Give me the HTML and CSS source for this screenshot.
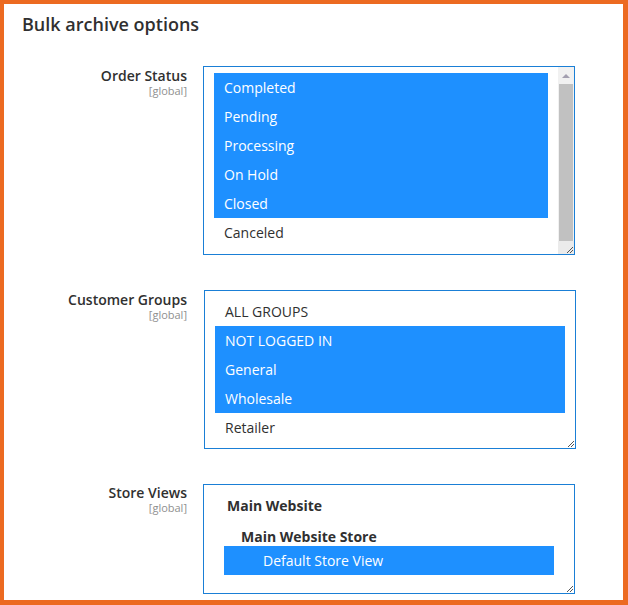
FILE: index.html
```html
<!DOCTYPE html>
<html lang="en">
<head>
<meta charset="utf-8">
<title>Bulk archive options</title>
<link rel="stylesheet" href="styles.css">
</head>
<body>
<div class="frame">
  <h2 class="title">Bulk archive options</h2>

  <div class="field">
    <div class="label"><span class="name">Order Status</span><span class="scope">[global]</span></div>
    <div class="select select-scroll">
      <div class="list-wrap">
        <div class="list list-clip">
          <div class="opt sel">Completed</div>
          <div class="opt sel">Pending</div>
          <div class="opt sel">Processing</div>
          <div class="opt sel">On Hold</div>
          <div class="opt sel">Closed</div>
          <div class="opt">Canceled</div>
        </div>
      </div>
      <div class="scrollbar">
        <div class="sb-btn"><span class="sb-arrow"></span></div>
        <div class="sb-thumb"></div>
        <div class="sb-corner"></div>
      </div>
      <svg class="grip" width="10" height="10" viewBox="0 0 10 10"><path d="M3 9L9 3M6 9L9 6" stroke="#555" stroke-width="1"/></svg>
    </div>
  </div>

  <div class="field">
    <div class="label"><span class="name">Customer Groups</span><span class="scope">[global]</span></div>
    <div class="select select-shift">
      <div class="list-wrap list-wrap-plain">
        <div class="list">
          <div class="opt">ALL GROUPS</div>
          <div class="opt sel">NOT LOGGED IN</div>
          <div class="opt sel">General</div>
          <div class="opt sel">Wholesale</div>
          <div class="opt">Retailer</div>
        </div>
      </div>
      <svg class="grip" width="10" height="10" viewBox="0 0 10 10"><path d="M3 9L9 3M6 9L9 6" stroke="#555" stroke-width="1"/></svg>
    </div>
  </div>

  <div class="field">
    <div class="label label-tight"><span class="name">Store Views</span><span class="scope">[global]</span></div>
    <div class="select">
      <div class="list-wrap list-wrap-store">
        <div class="list">
          <div class="group g1">Main Website</div>
          <div class="group g2">Main Website Store</div>
          <div class="opt sel nested">Default Store View</div>
        </div>
      </div>
      <svg class="grip" width="10" height="10" viewBox="0 0 10 10"><path d="M3 9L9 3M6 9L9 6" stroke="#555" stroke-width="1"/></svg>
    </div>
  </div>
</div>
</body>
</html>
```

FILE: styles.css
```css
* { box-sizing: border-box; }

html, body {
  margin: 0;
  padding: 0;
  background: #ffffff;
}

.frame {
  width: 628px;
  height: 605px;
  border-style: solid;
  border-color: #ec6a21;
  border-width: 4px 5px 5px 4px;
  background: #ffffff;
  padding: 8px 0 0 0;
  font-family: "Open Sans", "Noto Sans", sans-serif;
  color: #303030;
  overflow: hidden;
}

.title {
  margin: 0 0 30px 0;
  padding-left: 18px;
  font-size: 18px;
  line-height: 24px;
  font-weight: 600;
  color: #303030;
}

.field {
  display: flex;
  align-items: flex-start;
  gap: 16px;
  margin-bottom: 35px;
}

.label {
  width: 183px;
  display: flex;
  flex-direction: column;
  align-items: flex-end;
  text-align: right;
  padding-top: 1px;
}

.label-tight { padding-top: 0; }

.name {
  font-size: 14px;
  line-height: 18px;
  font-weight: 600;
  color: #303030;
}

.scope {
  font-size: 11px;
  line-height: 12px;
  color: #8f8f8f;
}

.select {
  position: relative;
  width: 372px;
  border: 1px solid #1a7fd6;
  display: flex;
  background: #fff;
}

.select-scroll { height: 189px; }
.select-shift { margin-left: 1px; height: 159px; }

.list-wrap {
  flex: 1;
  padding: 6px 10px 10px 10px;
}

.list-wrap-plain { padding: 6px 10px 6px 10px; }
.list-wrap-store { padding: 6px 10px 18px 10px; }

.list-clip {
  height: 171px;
  overflow: hidden;
}

.opt {
  height: 29px;
  line-height: 29px;
  padding-left: 10px;
  font-size: 14px;
  color: #303030;
  white-space: nowrap;
}

.opt.sel {
  background: #1e90ff;
  color: #ffffff;
}

.opt.nested {
  margin: 0 10px;
  padding-left: 39px;
}

.group {
  font-size: 14px;
  font-weight: 700;
  color: #303030;
  white-space: nowrap;
}

.g1 {
  height: 30px;
  line-height: 30px;
  padding-left: 13px;
}

.g2 {
  height: 25px;
  line-height: 20px;
  padding-top: 6px;
  padding-left: 27px;
}

.scrollbar {
  width: 16px;
  display: flex;
  flex-direction: column;
  background: #f1f1f1;
}

.sb-btn {
  height: 17px;
  display: flex;
  align-items: center;
  justify-content: center;
}

.sb-arrow {
  width: 0;
  height: 0;
  border-left: 4px solid transparent;
  border-right: 4px solid transparent;
  border-bottom: 4px solid #a39fb0;
}

.sb-thumb {
  flex: 1;
  margin: 0 1px;
  background: #c1c1c1;
}

.sb-corner {
  height: 13px;
  background: #ebebeb;
}

.grip {
  position: absolute;
  right: 0;
  bottom: 0;
}
```
